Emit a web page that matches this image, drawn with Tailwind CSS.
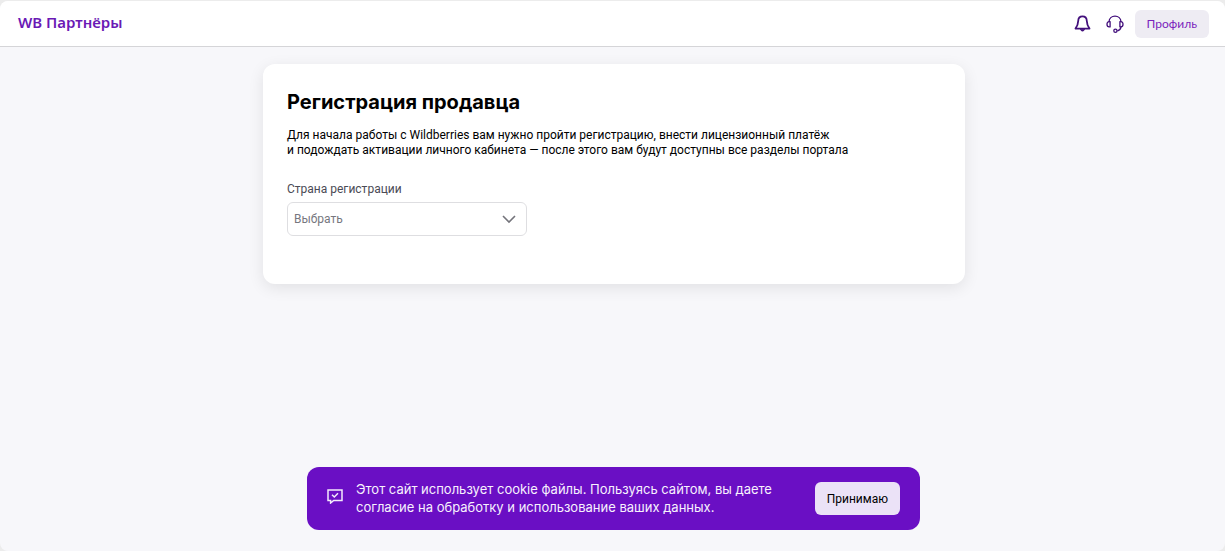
<!DOCTYPE html>
<html lang="ru">
<head>
<meta charset="utf-8">
<meta name="viewport" content="width=device-width, initial-scale=1">
<title>WB Партнёры</title>
<script src="https://cdn.jsdelivr.net/npm/@tailwindcss/browser@4"></script>
</head>
<body class="min-h-screen bg-[#ececec] pt-px font-['Roboto','Liberation_Sans',sans-serif] text-black">
<div class="flex min-h-[calc(100vh-1px)] flex-col overflow-hidden rounded-lg bg-[#f7f7fa]">
  <header class="flex h-[46px] items-center justify-between border-b border-[#d5d5d8] bg-white pr-4 pl-[18px]">
    <a href="#" class="pb-1 font-['Noto_Sans',sans-serif] text-[15px] leading-5 font-semibold text-[#6a19b5]">WB Партнёры</a>
    <nav class="flex items-center">
      <button type="button" aria-label="Уведомления" class="mr-3 text-[#43107c]">
        <svg class="size-5" viewBox="0 0 20 20" fill="none" stroke="currentColor" stroke-width="1.8" stroke-linejoin="round" stroke-linecap="round"><path d="M9.5 2.4C6.9 2.4 5.3 4.4 5.2 7C5.1 10.2 4.3 12.2 2.5 14.6H16.5C14.7 12.2 13.9 10.2 13.8 7C13.7 4.4 12.1 2.4 9.5 2.4Z"/><path d="M7.6 15.6C8 17.6 11 17.6 11.4 15.6Z" fill="currentColor" stroke-width="1"/></svg>
      </button>
      <button type="button" aria-label="Поддержка" class="mr-2.5 text-[#43107c]">
        <svg class="size-5" viewBox="0 0 20 20" fill="none" stroke="currentColor" stroke-width="1.3" stroke-linejoin="round"><path d="M4 7.8C4.2 4.6 6.6 2.2 10 2.2S15.8 4.6 16 7.8"/><path d="M5.1 7.6V12.9H4.2C2.8 12.9 2 11.8 2 10.3S2.8 7.6 4.2 7.6ZM14.9 7.6V12.9H15.8C17.2 12.9 18 11.8 18 10.3S17.2 7.6 15.8 7.6Z"/><path d="M16 12.9C15.7 15.2 14.3 16.5 12.3 16.8"/><circle cx="10.4" cy="16.7" r="1.6"/></svg>
      </button>
      <button type="button" class="h-7 rounded-md bg-[#eeecf3] px-3 font-['Lato',sans-serif] text-xs text-[#7a1ebc]">Профиль</button>
    </nav>
  </header>

  <main class="flex flex-1 flex-col items-center pt-[17px] pl-[3px]">
    <section class="w-full max-w-[702px] rounded-xl bg-white px-6 pt-6 pb-12 shadow-[0_4px_16px_rgba(0,0,0,0.09)]">
      <h1 class="font-['Inter',sans-serif] text-xl leading-7 font-bold">Регистрация продавца</h1>
      <p class="mt-3 text-xs leading-[15px]">Для начала работы с Wildberries вам нужно пройти регистрацию, внести лицензионный платёж<br>и подождать активации личного кабинета — после этого вам будут доступны все разделы портала</p>
      <label for="country" class="mt-[23px] block text-xs leading-4 text-[#4b4b55]">Страна регистрации</label>
      <div class="mt-[5px] grid w-60 max-w-full items-center">
        <select id="country" class="col-start-1 row-start-1 h-[34px] w-full appearance-none rounded-md border border-[#dedee1] bg-white pr-8 pl-1.5 text-xs text-[#77777f]">
          <option>Выбрать</option>
        </select>
        <svg class="pointer-events-none col-start-1 row-start-1 mr-2.5 h-4 w-4 justify-self-end" viewBox="0 0 16 16" fill="none" stroke="#74747b" stroke-width="1.6"><path d="M2 5L8 11L14 5"/></svg>
      </div>
    </section>
  </main>

  <div class="flex justify-center pb-[21px] pl-0.5">
    <aside class="flex min-h-[63px] w-full max-w-[613px] items-center rounded-xl bg-[#6a0fc4] px-5">
      <svg class="mb-1.5 size-4 shrink-0" viewBox="0 0 16 16" fill="none" stroke="#f3eafb" stroke-width="1.5"><path d="M1 2H15V12.4H6.7L3.6 15V12.4H1Z"/><path d="M5 6.8L7.3 9L11 5.3"/></svg>
      <p class="ml-[13px] flex-1 pb-0.5 font-['Inter',sans-serif] text-[13px] leading-[18px] text-[#f7f1fd]">Этот сайт использует cookie файлы. Пользуясь сайтом, вы даете<br>согласие на обработку и использование ваших данных.</p>
      <button type="button" class="h-[33px] shrink-0 rounded-md bg-[#ebe2f7] px-3 text-xs">Принимаю</button>
    </aside>
  </div>
</div>
</body>
</html>
